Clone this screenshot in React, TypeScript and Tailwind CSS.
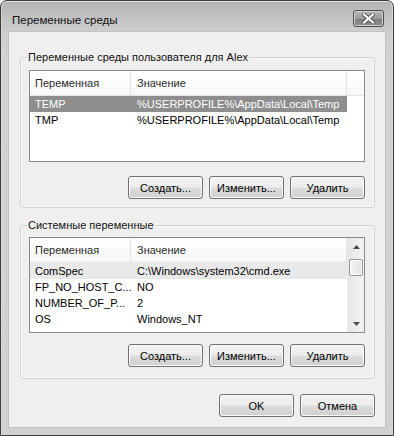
import React from "react";

function Btn({ children }: { children: React.ReactNode }) {
  return (
    <div className="w-[75px] h-[23px] rounded-[3px] border border-[#707070] bg-[linear-gradient(to_bottom,#f4f4f4_0%,#ececec_48%,#dcdcdc_52%,#d0d0d0_100%)] shadow-[inset_0_0_0_1px_#fbfbfb] flex items-center justify-center text-[11px] leading-[14px] text-black">
      {children}
    </div>
  );
}

function Row({
  a,
  b,
  variant,
}: {
  a: string;
  b: string;
  variant?: "sel" | "inactive";
}) {
  const bg =
    variant === "sel"
      ? "bg-[#8e8e8e] text-white"
      : variant === "inactive"
      ? "bg-[#e9e9e9] text-black"
      : "text-black";
  return (
    <div className="flex h-[16px]">
      <div className={`flex w-[317px] items-center ${bg}`}>
        <div className="w-[101px] pl-[5px] whitespace-nowrap overflow-hidden">{a}</div>
        <div className="w-[216px] pl-[6px] whitespace-nowrap overflow-hidden">{b}</div>
      </div>
    </div>
  );
}

function Header({ filler = true }: { filler?: boolean }) {
  return (
    <div className="flex h-[25px] border-b border-[#e3e3e3] bg-[linear-gradient(to_bottom,#ffffff,#f7f7f7)] text-[#2a2a2a]">
      <div className="w-[101px] pl-[5px] flex items-center border-r border-[#e3e3e3]">Переменная</div>
      <div className="w-[216px] pl-[6px] flex items-center border-r border-[#e3e3e3]">Значение</div>
      {filler && <div className="flex-1" />}
    </div>
  );
}

function Arrow({ up }: { up?: boolean }) {
  return (
    <div className="h-[17px] flex items-center justify-center">
      <svg width="7" height="4" viewBox="0 0 7 4">
        {up ? (
          <polygon points="3.5,0 7,4 0,4" fill="#4a4a4a" />
        ) : (
          <polygon points="0,0 7,0 3.5,4" fill="#4a4a4a" />
        )}
      </svg>
    </div>
  );
}

export default function App() {
  return (
    <div className="w-[394px] h-[436px] font-['Liberation_Sans',Arial,sans-serif] text-[11px] leading-[14px]">
      <div className="w-[394px] h-[436px] flex flex-col rounded-t-[7px] border border-[#3a3a3a] bg-[linear-gradient(to_bottom,#b4b4b4_0px,#cdcdcd_30px,#d3d3d3_60px,#d0d0d0_100%)] shadow-[inset_0_1px_0_#e2e2e2,inset_1px_0_0_#dadada,inset_-1px_0_0_#dadada]">
        {/* Title bar */}
        <div className="h-[30px] flex items-start justify-between pl-[11px] pr-[9px]">
          <div className="mt-[11px] text-[11.5px] leading-[16px] text-[#111]">Переменные среды</div>
          <div className="mt-[9px] w-[31px] h-[17px] rounded-[3px] border border-[#4d4d4d] bg-[linear-gradient(to_bottom,#b8b8b8,#9a9a9a_50%,#7e7e7e_51%,#8e8e8e)] shadow-[inset_0_0_0_1px_#cfcfcf] flex items-center justify-center">
            <svg width="13" height="11" viewBox="0 0 13 11">
              <path d="M2 1.5 L11 9.5 M11 1.5 L2 9.5" stroke="#555" strokeWidth="4" strokeLinecap="square" />
              <path d="M2 1.5 L11 9.5 M11 1.5 L2 9.5" stroke="#fff" strokeWidth="2.2" strokeLinecap="square" />
            </svg>
          </div>
        </div>

        {/* Client area */}
        <div className="ml-[7px] mr-[7px] h-[397px] border border-[#c2c2c2] bg-[#efefef] flex flex-col pt-[18px]">
          {/* Group 1 */}
          <fieldset className="ml-[11px] mr-[10px] rounded-[3px] border border-[#d2d2d2] shadow-[inset_0_0_0_1px_#fafafa] pl-[8px] pr-[9px] pb-[8px]">
            <legend className="-ml-[2px] px-[1px] leading-[15px] text-[#111]">Переменные среды пользователя для Alex</legend>
            <div className="mt-[5px] w-[336px] h-[92px] border border-[#8a8a8a] bg-white flex flex-col">
              <Header />
              <Row a="TEMP" b="%USERPROFILE%\AppData\Local\Temp" variant="sel" />
              <Row a="TMP" b="%USERPROFILE%\AppData\Local\Temp" />
            </div>
            <div className="mt-[14px] flex justify-end gap-[6px]">
              <Btn>Создать...</Btn>
              <Btn>Изменить...</Btn>
              <Btn>Удалить</Btn>
            </div>
          </fieldset>

          {/* Group 2 */}
          <fieldset className="mt-[10px] ml-[11px] mr-[10px] rounded-[3px] border border-[#d2d2d2] shadow-[inset_0_0_0_1px_#fafafa] pl-[8px] pr-[9px] pb-[11px]">
            <legend className="-ml-[2px] px-[1px] leading-[15px] text-[#111]">Системные переменные</legend>
            <div className="mt-[4px] w-[336px] h-[96px] border border-[#8a8a8a] bg-white flex">
              <div className="flex-1 flex flex-col overflow-hidden">
                <Header filler={false} />
                <Row a="ComSpec" b="C:\Windows\system32\cmd.exe" variant="inactive" />
                <Row a="FP_NO_HOST_C..." b="NO" />
                <Row a="NUMBER_OF_P..." b="2" />
                <Row a="OS" b="Windows_NT" />
              </div>
              <div className="w-[17px] bg-[linear-gradient(to_right,#e6e6e6,#f3f3f3)] border-l border-[#ebebeb] flex flex-col">
                <Arrow up />
                <div className="mx-[1px] mt-[4px] h-[17px] rounded-[2px] border border-[#959595] bg-[linear-gradient(to_right,#f6f6f6,#e2e2e2)] shadow-[inset_0_0_0_1px_#fcfcfc]" />
                <div className="flex-1" />
                <Arrow />
              </div>
            </div>
            <div className="mt-[11px] flex justify-end gap-[6px]">
              <Btn>Создать...</Btn>
              <Btn>Изменить...</Btn>
              <Btn>Удалить</Btn>
            </div>
          </fieldset>

          <div className="mt-[15px] mr-[10px] flex justify-end gap-[6px]">
            <Btn>OK</Btn>
            <Btn>Отмена</Btn>
          </div>
        </div>
      </div>
    </div>
  );
}
